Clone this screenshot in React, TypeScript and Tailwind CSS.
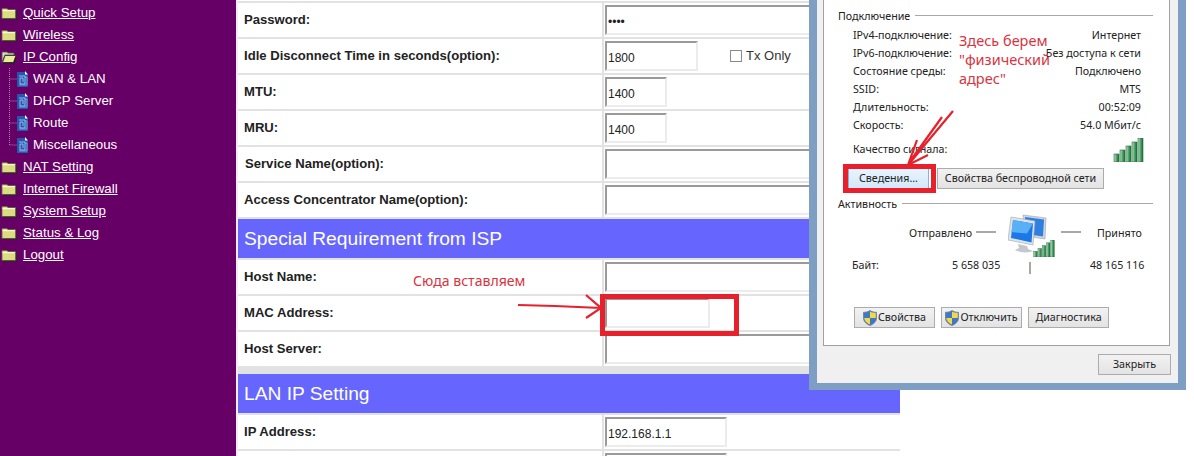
import React from "react";

const sans = "font-['Liberation_Sans',Arial,sans-serif]";
const dlg = "font-['Noto_Sans','DejaVu_Sans',sans-serif]";

function Folder({ open = false }: { open?: boolean }) {
  return open ? (
    <svg width="16" height="14" viewBox="0 0 16 14" className="shrink-0">
      <path d="M1 2h5l1 1h6v2H4L1 12z" fill="#d8d8b0" stroke="#555" strokeWidth="0.8" />
      <path d="M4 5.5h11L12.5 12.5H1.5z" fill="#ecec98" stroke="#333" strokeWidth="0.9" />
      <path d="M2 13h11l2-6" fill="none" stroke="#222" strokeWidth="1.2" />
    </svg>
  ) : (
    <svg width="16" height="14" viewBox="0 0 16 14" className="shrink-0">
      <path d="M1 2.5h5l1 1.2h7.5v8.8H1z" fill="#dcdc80" stroke="#66664a" strokeWidth="0.8" />
      <path d="M1.600 4.600h12.400" stroke="#fafad0" strokeWidth="1.200" />
      <path d="M1.500 13.200h14V5" fill="none" stroke="#2a2a20" strokeWidth="1" />
    </svg>
  );
}

function FileIcon() {
  return (
    <svg width="11" height="16" viewBox="0 0 11 16" className="shrink-0">
      <path d="M0 1h8l3 3v12H0z" fill="#2556b0" />
      <path d="M8 0l3 3.500H8z" fill="#fff" />
      <path d="M2 5h6v8H3V7h3v4" fill="none" stroke="#a8c8f0" strokeWidth="0.9" />
      <path d="M8 6h2v8H2" fill="none" stroke="#8fb4e8" strokeWidth="0.8" />
    </svg>
  );
}

function Tree({ last = false }: { last?: boolean }) {
  return (
    <svg width="17" height="22" viewBox="0 0 17 22" className="shrink-0">
      <path d={last ? "M9.500 0V11H17" : "M9.500 0V22M9.500 11H17"} fill="none" stroke="#a98aa9" strokeWidth="1" strokeDasharray="1 1" />
    </svg>
  );
}

function Shield() {
  return (
    <svg width="14" height="16" viewBox="0 0 14 16" className="shrink-0">
      <path d="M7 .5c2 1.300 4 1.800 6.500 1.800V8c0 3.500-2.800 6-6.500 7.500C3.300 14 .5 11.500.5 8V2.300C3 2.300 5 1.800 7 .5z" fill="#3f78c4" stroke="#6a7c94" strokeWidth="0.8" />
      <path d="M7 1.500V8h5.800V3C10.500 2.900 8.700 2.500 7 1.500z" fill="#f4d84a" />
      <path d="M7 8v6.500C4 13.300 1.400 11 1.200 8z" fill="#f4d84a" />
    </svg>
  );
}

function Signal({ w, h, id }: { w: number; h: number; id: string }) {
  const bars = [
    [1, 16, 5],
    [7, 12, 5],
    [13, 8, 5],
    [19, 4, 5],
    [25, 0, 5],
  ];
  return (
    <svg width={w} height={h} viewBox="0 0 31 24" className="shrink-0">
      <defs>
        <linearGradient id={id} x1="0" x2="1" y1="0" y2="0">
          <stop offset="0" stopColor="#bfe3c8" />
          <stop offset="0.6" stopColor="#3f9a5c" />
          <stop offset="1" stopColor="#1d6b38" />
        </linearGradient>
      </defs>
      {bars.map(([x, y, bw]) => (
        <rect key={x} x={x} y={y} width={bw} height={24 - y} fill={`url(#${id})`} stroke="#2c6a42" strokeWidth="0.6" />
      ))}
    </svg>
  );
}

function Computers() {
  return (
    <div className="relative w-[48px] h-[43px] shrink-0">
      <svg width="48" height="43" viewBox="0 0 48 43">
        <path d="M15 1l23 3-1 21-20-3z" fill="#cfd6dc" stroke="#9aa4ac" strokeWidth="0.6" />
        <path d="M17 3l19 2.500-1 17-17-2.500z" fill="#2f7fe0" />
        <path d="M3 3l24 4-2 24L0 26z" fill="#dfe4e8" stroke="#9aa4ac" strokeWidth="0.6" />
        <path d="M5 6l20 3.500-1.500 19L3 24z" fill="#1c78e6" />
        <path d="M5 6l20 3.500-6 10L3.500 18z" fill="#5ab0f5" />
        <path d="M10 30l9 2 1 3 5 2c-3 2-13 2-18-1l4-2z" fill="#c4c8cc" />
      </svg>
      <div className="absolute left-[25px] top-[26px]">
        <Signal w={22} h={17} id="sig2" />
      </div>
    </div>
  );
}

function Field({ w, value, type = "text" }: { w: number; value?: string; type?: string }) {
  return (
    <input
      readOnly
      type={type}
      defaultValue={value}
      style={{ width: w }}
      className={`h-[30px] bg-white border-2 border-t-[#9a9a9a] border-l-[#9a9a9a] border-r-[#ececec] border-b-[#ececec] px-px pt-[3px] text-[12px] text-[#222] outline-none ${sans}`}
    />
  );
}

function Row({ label, children, pad = "pl-[6px]" }: { label: string; children?: React.ReactNode; pad?: string }) {
  return (
    <div className="flex gap-[2px] h-[34px] shrink-0">
      <div className={`w-[364px] bg-white flex items-center ${pad} text-[13.100px] font-bold text-[#222] ${sans}`}>{label}</div>
      <div className="flex-1 bg-white flex items-center pl-px">{children}</div>
    </div>
  );
}

function Header({ children }: { children: React.ReactNode }) {
  return <div className={`h-[39px] shrink-0 bg-[#6666ff] text-white text-[19.200px] flex items-center pl-[6px] pt-px ${sans}`}>{children}</div>;
}

function Stat({ k, v }: { k: string; v: string }) {
  return (
    <div className="h-[18px] flex items-center justify-between">
      <span>{k}</span>
      <span>{v}</span>
    </div>
  );
}

function Btn({ children, className = "" }: { children: React.ReactNode; className?: string }) {
  return (
    <div className={`h-[21px] border border-[#acacac] bg-gradient-to-b from-[#f2f2f2] to-[#e3e3e3] flex items-center justify-center gap-[1px] text-[#222] ${className}`}>
      {children}
    </div>
  );
}

function Heading({ children }: { children: React.ReactNode }) {
  return (
    <div className="flex items-center gap-[5px] pl-[14px] pr-[16px] h-[18px]">
      <span>{children}</span>
      <div className="flex-1 h-px bg-[#a8a8a8] -translate-y-[1px]" />
    </div>
  );
}

const top = [
  ["Quick Setup"],
  ["Wireless"],
];
const rest = ["NAT Setting", "Internet Firewall", "System Setup", "Status & Log", "Logout"];
const subs = ["WAN & LAN", "DHCP Server", "Route", "Miscellaneous"];

export default function App() {
  return (
    <div className={`relative w-[1194px] h-[456px] overflow-hidden flex bg-white ${sans}`}>
      <nav className="w-[236px] shrink-0 bg-[#660066] pt-[2px] text-white text-[13.300px]">
        {top.map(([t]) => (
          <a key={t} className="flex items-center h-[22px] pl-px gap-[6px] underline"><Folder /><span>{t}</span></a>
        ))}
        <a className="flex items-center h-[22px] pl-px gap-[6px] underline"><Folder open /><span>IP Config</span></a>
        {subs.map((t, i) => (
          <div key={t} className="flex items-center h-[22px]">
            <Tree last={i === subs.length - 1} />
            <FileIcon />
            <span className="ml-[5px]">{t}</span>
          </div>
        ))}
        {rest.map((t) => (
          <a key={t} className="flex items-center h-[22px] pl-px gap-[6px] underline"><Folder /><span>{t}</span></a>
        ))}
      </nav>

      <main className="flex-1 border-l-2 border-[#f6ecf6]">
        <div className="w-[662px] h-[455px] mt-px pt-[2px] bg-[#e2e2e2] flex flex-col gap-[2px] overflow-hidden">
          <Row label="Password:"><Field w={240} value="1234" type="password" /></Row>
          <Row label="Idle Disconnect Time in seconds(option):">
            <Field w={93} value="1800" />
            <span className="ml-[32px] w-[12px] h-[12px] border border-[#8a8a8a] bg-white" />
            <span className="ml-[4px] text-[13px] text-[#333]">Tx Only</span>
          </Row>
          <Row label="MTU:"><Field w={62} value="1400" /></Row>
          <Row label="MRU:"><Field w={62} value="1400" /></Row>
          <Row label="Service Name(option):" pad="pl-[7px]"><Field w={240} /></Row>
          <Row label="Access Concentrator Name(option):"><Field w={240} /></Row>
          <Header>Special Requirement from ISP</Header>
          <Row label="Host Name:"><Field w={240} /></Row>
          <Row label="MAC Address:"><Field w={105} /></Row>
          <Row label="Host Server:"><Field w={240} /></Row>
          <div className="mt-[6px]"><Header>LAN IP Setting</Header></div>
          <Row label="IP Address:"><Field w={122} value="192.168.1.1" /></Row>
          <Row label=""><Field w={122} /></Row>
        </div>
      </main>

      <section className={`absolute left-[809px] top-0 w-[377px] h-[390px] bg-[#7f9ec4] px-[8px] pb-[7px] text-[10.700px] text-[#222] ${dlg}`}>
        <div className="h-full bg-[#f0f0f0] flex flex-col">
          <div className="mx-[6px] h-[346px] w-[347px] bg-white border border-[#a0a0a0] border-t-0 pt-[7px]">
            <Heading>Подключение</Heading>
            <div className="mt-[1px] pl-[29px] pr-[28px]">
              <Stat k="IPv4-подключение:" v="Интернет" />
              <Stat k="IPv6-подключение:" v="Без доступа к сети" />
              <Stat k="Состояние среды:" v="Подключено" />
              <Stat k="SSID:" v="MTS" />
              <Stat k="Длительность:" v="00:52:09" />
              <Stat k="Скорость:" v="54.0 Мбит/с" />
            </div>
            <div className="mt-[4px] h-[24px] pl-[29px] pr-[25px] flex items-center justify-between">
              <span className="translate-y-[-1px]">Качество сигнала:</span>
              <Signal w={31} h={24} id="sig1" />
            </div>
            <div className="mt-[6px] pl-[24px] flex gap-[8px]">
              <Btn className="w-[81px] !border-[#7eb4ea] !from-[#e8f4fd] !to-[#d2e8fa]">Сведения...</Btn>
              <Btn className="w-[167px]">Свойства беспроводной сети</Btn>
            </div>
            <div className="mt-[6px]"><Heading>Активность</Heading></div>
            <div className="mt-[1px] pl-[85px] flex items-center h-[43px]">
              <span className="w-[67px] pb-[5px]">Отправлено</span>
              <div className="w-[20px] h-[1.500px] mb-[7px] bg-[#a8a8a8]" />
              <div className="ml-[12px]"><Computers /></div>
              <div className="ml-[5px] w-[20px] h-[1.500px] mb-[7px] bg-[#a8a8a8]" />
              <span className="ml-[16px] pb-[5px]">Принято</span>
            </div>
            <div className="pl-[28px] flex items-center h-[16px]">
              <span className="w-[100px]">Байт:</span>
              <span className="w-[77px]">5 658 035</span>
              <div className="w-[2px] h-[12px] bg-[#a8a8a8] translate-y-[3px]" />
              <span className="ml-[59px]">48 165 116</span>
            </div>
            <div className="mt-[34px] pl-[30px] flex gap-[6px]">
              <Btn className="w-[81px]"><Shield />Свойства</Btn>
              <Btn className="w-[81px]"><Shield />Отключить</Btn>
              <Btn className="w-[81px]">Диагностика</Btn>
            </div>
          </div>
          <div className="flex justify-end pr-[7px] pt-[8px]">
            <Btn className="w-[73px]">Закрыть</Btn>
          </div>
        </div>
      </section>

      <div className="absolute left-[843px] top-[164px] w-[93px] h-[29px] border-[5px] border-[#e8202c]" />
      <div className="absolute left-[600px] top-[294px] w-[139px] h-[42px] border-[5px] border-[#e8202c]" />

      <div className={`absolute left-[959px] top-[31px] text-[14.500px] leading-[19px] text-[#d8343f] ${dlg}`}>
        Здесь берем<br />"физический<br />адрес"
      </div>
      <div className={`absolute left-[413px] top-[272px] text-[14.100px] leading-[18px] text-[#d8343f] ${dlg}`}>Сюда вставляем</div>

      <svg className="absolute left-[900px] top-[105px]" width="60" height="65" viewBox="900 105 60 65">
        <path d="M953 111L908 165M942 117L911 160M928 155L908 165M917 140L908 165" fill="none" stroke="#e8202c" strokeWidth="2.200" />
      </svg>
      <svg className="absolute left-[515px] top-[290px]" width="90" height="32" viewBox="515 290 90 32">
        <path d="M518 305L555 306L601 308M586 295L601 308L586 318" fill="none" stroke="#e8202c" strokeWidth="2.200" />
      </svg>
    </div>
  );
}
